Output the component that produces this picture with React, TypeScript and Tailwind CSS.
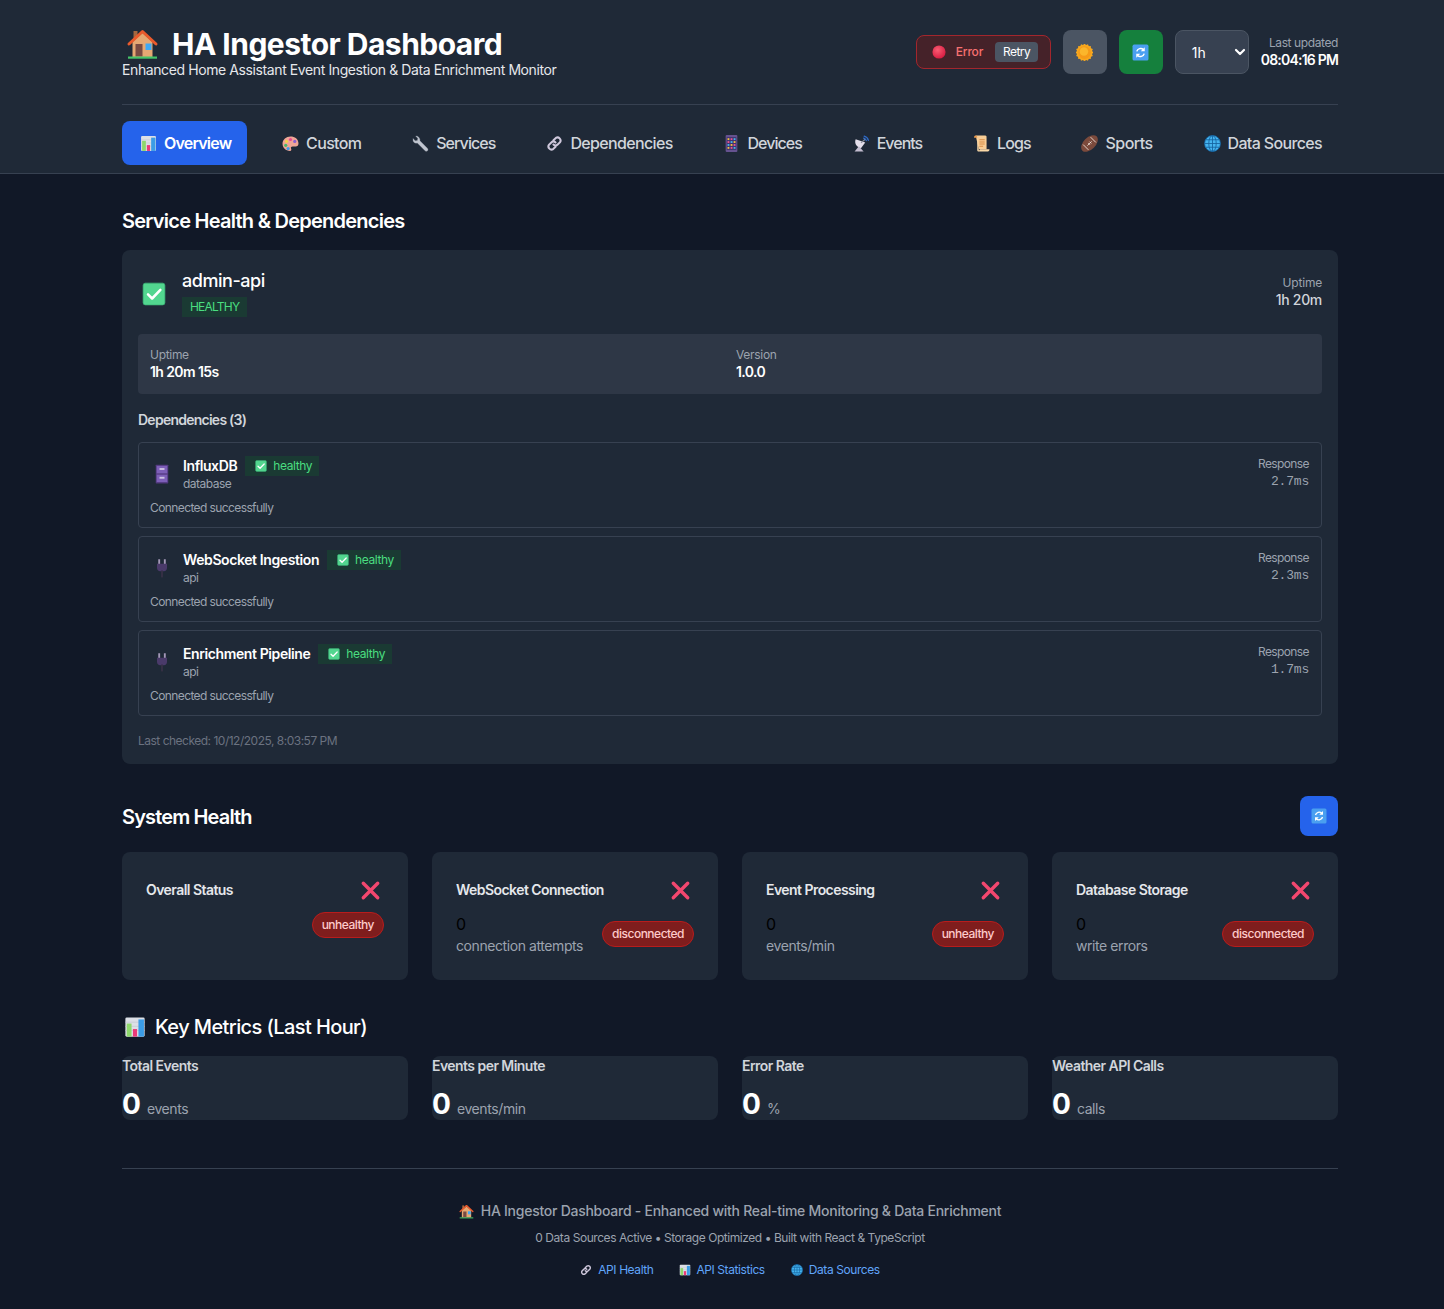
import type { ReactNode } from "react";

function House({ className = "" }: { className?: string }) {
    return (
        <svg className={className} viewBox="0 0 32 32">
            <rect x="7" y="3" width="4" height="11" fill="#a5673f" />
            <path d="M6 14 16 5l10 9v15H6z" fill="#e6a873" />
            <path d="M2.500 16 16 3.500 29.500 16" fill="none" stroke="#ea5a2c" strokeWidth="3" strokeLinecap="round" strokeLinejoin="round" />
            <rect x="9" y="16" width="7" height="12.500" fill="#7a4a42" />
            <rect x="19" y="15.500" width="6" height="6.500" fill="#3fa9f5" />
            <rect x="1.500" y="28.500" width="29" height="2.200" fill="#45c468" />
        </svg>
    );
}

function Chart({ className = "" }: { className?: string }) {
    return (
        <svg className={className} viewBox="0 0 32 32">
            <rect x="2" y="2" width="28" height="28" rx="2" fill="#dcdfe6" />
            <path d="M2 9h28M2 15h28M2 21h28" stroke="#c2c6d0" strokeWidth="1" />
            <rect x="4" y="11" width="7" height="19" fill="#8ed86c" />
            <rect x="13" y="19" width="6" height="11" fill="#ec3a78" />
            <rect x="21" y="5" width="8" height="25" fill="#3b9ce6" />
        </svg>
    );
}

function Palette({ className = "" }: { className?: string }) {
    return (
        <svg className={className} viewBox="0 0 32 32">
            <path d="M16 3C8 3 1 9 1 16.500S7 30 15 30c3 0 3-3 2-4.500-1-2 0-4 3-4h6c3 0 5-2 5-5.500C31 8 24 3 16 3z" fill="#f0a596" />
            <circle cx="8.500" cy="12" r="3" fill="#f0d24c" />
            <circle cx="16" cy="8.500" r="3" fill="#e9488f" />
            <circle cx="24" cy="12" r="3" fill="#8a5fd0" />
            <circle cx="7" cy="19.500" r="3" fill="#47b96b" />
            <circle cx="11.500" cy="25.500" r="3" fill="#3f9fe8" />
        </svg>
    );
}

function Wrench({ className = "" }: { className?: string }) {
    return (
        <svg className={className} viewBox="0 0 32 32">
            <path d="M7 2 11 6.500 10 10.500 6 11 2 6.500C1 11 3 15 7.500 15.500L10 15l14.500 14.500c1.500 1.500 3.500 1.500 4.700.2 1.300-1.300 1.200-3.200-.2-4.700L15 11c.8-5-4-10-8-9z" fill="#c0c5cf" stroke="#9199a6" strokeWidth=".6" />
        </svg>
    );
}

function ChainLink({ className = "" }: { className?: string }) {
    return (
        <svg className={className} viewBox="0 0 32 32" fill="none" stroke="#cfc8dc" strokeWidth="3.800" strokeLinecap="round">
            <path d="M14 10 18.500 5.500a5.800 5.800 0 0 1 8 8L22 18a5.800 5.800 0 0 1-8 0" />
            <path d="M18 22 13.500 26.500a5.800 5.800 0 0 1-8-8L10 14a5.800 5.800 0 0 1 8 0" />
        </svg>
    );
}

function Phone({ className = "" }: { className?: string }) {
    return (
        <svg className={className} viewBox="0 0 32 32">
            <rect x="5" y="0" width="22" height="32" rx="2" fill="#65528f" />
            <rect x="7" y="4" width="18" height="24" fill="#3f3270" />
            {[6, 11.500, 17, 22.500].map((y, r) =>
                [8.500, 14.300, 20].map((x, i) => (
                    <rect key={`${x}-${y}`} x={x} y={y} width="3.500" height="3.500" fill={["#f0c23f", "#e9568f", "#45b8e8"][(i + r) % 3]} />
                ))
            )}
        </svg>
    );
}

function Satellite({ className = "" }: { className?: string }) {
    return (
        <svg className={className} viewBox="0 0 32 32">
            <path d="M5 8c-3 8 2 15 10 17l8-11z" fill="#e3deea" />
            <path d="M11 21 3 31h17z" fill="#c3bdd0" />
            <path d="M15 15 23 8" stroke="#8a8f9c" strokeWidth="2" />
            <path d="M21 2c4 1 7 4 8 8M20 6c2 .6 4 2.400 5 4.500" fill="none" stroke="#2f6bc8" strokeWidth="2.400" strokeLinecap="round" />
        </svg>
    );
}

function Scroll({ className = "" }: { className?: string }) {
    return (
        <svg className={className} viewBox="0 0 32 32">
            <path d="M5 1h18c2 0 2.500 1.500 2.500 3v23H11z" fill="#f8cd96" />
            <path d="M5 1C3 1 2 2.500 2 5h6C8 2.500 7 1 5 1z" fill="#e99a4f" />
            <path d="M8 3v25c0 2 1 3 3 3h17c2 0 3-1.500 3-4H13c0 1.500-.5 2-2 2" fill="#fbd9a8" />
            <path d="M12 9h10M12 13h10M12 17h10M12 21h7" stroke="#d68c45" strokeWidth="2" />
        </svg>
    );
}

function Football({ className = "" }: { className?: string }) {
    return (
        <svg className={className} viewBox="0 0 32 32">
            <ellipse cx="16" cy="16" rx="19" ry="11.500" transform="rotate(-45 16 16)" fill="#7b4a3c" />
            <path d="M4 18 14 28M18 4 28 14" stroke="#e8d7cf" strokeWidth="1.800" />
            <path d="M12 20 20 12M13.500 15l3.500 3.500M16 12.500l3.500 3.500" stroke="#f2e7e0" strokeWidth="1.500" />
        </svg>
    );
}

function Globe({ className = "" }: { className?: string }) {
    return (
        <svg className={className} viewBox="0 0 32 32" fill="none" stroke="#15629e" strokeWidth="1.600">
            <circle cx="16" cy="16" r="15" fill="#45b4ef" />
            <ellipse cx="16" cy="16" rx="7" ry="15" />
            <path d="M16 1v30M1 16h30M3.500 9h25M3.500 23h25" />
        </svg>
    );
}

function Sun({ className = "" }: { className?: string }) {
    return (
        <svg className={className} viewBox="0 0 32 32">
            {[0, 22.500, 45, 67.500].map((a) => (
                <rect key={a} x="4" y="4" width="24" height="24" fill="#f7a81e" transform={`rotate(${a} 16 16)`} />
            ))}
            <circle cx="16" cy="16" r="12" fill="#f59a18" />
            <circle cx="15" cy="14" r="8" fill="#fbb62b" />
        </svg>
    );
}

function Refresh({ className = "" }: { className?: string }) {
    return (
        <svg className={className} viewBox="0 0 32 32">
            <rect x="1" y="1" width="30" height="30" rx="3" fill="#4a9ff0" />
            <path d="M9 14a7.500 7.500 0 0 1 12.500-3.500" fill="none" stroke="#fff" strokeWidth="2.800" />
            <path d="M24 6v7.500h-7.500z" fill="#fff" />
            <path d="M23 18a7.500 7.500 0 0 1-12.500 3.500" fill="none" stroke="#fff" strokeWidth="2.800" />
            <path d="M8 26v-7.500h7.500z" fill="#fff" />
        </svg>
    );
}

function RedDot({ className = "" }: { className?: string }) {
    return (
        <svg className={className} viewBox="0 0 32 32">
            <defs>
                <radialGradient id="redDot" cx="40%" cy="35%" r="70%">
                    <stop offset="0%" stopColor="#f95c72" />
                    <stop offset="100%" stopColor="#d5193f" />
                </radialGradient>
            </defs>
            <circle cx="16" cy="16" r="15" fill="url(#redDot)" />
        </svg>
    );
}

function CheckBox({ className = "" }: { className?: string }) {
    return (
        <svg className={className} viewBox="0 0 32 32">
            <rect x="1.500" y="1.500" width="29" height="29" rx="3" fill="#52d68f" stroke="#3cb878" strokeWidth="1" />
            <path d="M8 16.500l5.500 5.500L24.500 10.500" fill="none" stroke="#fff" strokeWidth="3.400" strokeLinecap="round" strokeLinejoin="round" />
        </svg>
    );
}

function Cabinet({ className = "" }: { className?: string }) {
    return (
        <svg className={className} viewBox="0 0 32 32">
            <rect x="6" y="1" width="20" height="30" rx="1" fill="#52397f" />
            <rect x="7.500" y="3" width="17" height="12" fill="#7d5fb8" />
            <rect x="7.500" y="17" width="17" height="12" fill="#7d5fb8" />
            <rect x="12" y="6.500" width="8" height="3" fill="#cdc2e2" />
            <rect x="12" y="20.500" width="8" height="3" fill="#cdc2e2" />
        </svg>
    );
}

function Plug({ className = "" }: { className?: string }) {
    return (
        <svg className={className} viewBox="0 0 32 32">
            <rect x="10" y="2" width="3" height="8" fill="#a498b8" />
            <rect x="19" y="2" width="3" height="8" fill="#a498b8" />
            <path d="M8 9h16v7c0 3-2 5-5 5h-6c-3 0-5-2-5-5z" fill="#4a3a6a" />
            <rect x="14.500" y="20" width="3" height="11" fill="#373046" />
        </svg>
    );
}

function Cross({ className = "" }: { className?: string }) {
    return (
        <svg className={className} viewBox="0 0 32 32">
            <path d="M5 5 27 27M27 5 5 27" stroke="#f2476f" strokeWidth="5.200" strokeLinecap="round" />
        </svg>
    );
}

const navItems = [
    { name: "Overview", icon: Chart, tracking: "tracking-[-0.8px]" },
    { name: "Custom", icon: Palette, tracking: "tracking-[-0.65px]" },
    { name: "Services", icon: Wrench, tracking: "tracking-[-0.9px]" },
    { name: "Dependencies", icon: ChainLink, tracking: "tracking-[-0.65px]" },
    { name: "Devices", icon: Phone, tracking: "tracking-[-0.95px]" },
    { name: "Events", icon: Satellite, tracking: "tracking-[-1px]" },
    { name: "Logs", icon: Scroll, tracking: "tracking-[-0.9px]" },
    { name: "Sports", icon: Football, tracking: "tracking-[-0.5px]" },
    { name: "Data Sources", icon: Globe, tracking: "tracking-[-0.65px]" },
];

const dependencies = [
    { name: "InfluxDB", kind: "database", time: "2.7ms", icon: Cabinet },
    { name: "WebSocket Ingestion", kind: "api", time: "2.3ms", icon: Plug },
    { name: "Enrichment Pipeline", kind: "api", time: "1.7ms", icon: Plug },
];

const healthCards = [
    { title: "Overall Status", status: "unhealthy", value: "", label: "" },
    { title: "WebSocket Connection", status: "disconnected", value: "0", label: "connection attempts" },
    { title: "Event Processing", status: "unhealthy", value: "0", label: "events/min" },
    { title: "Database Storage", status: "disconnected", value: "0", label: "write errors" },
];

const metrics = [
    { title: "Total Events", unit: "events" },
    { title: "Events per Minute", unit: "events/min" },
    { title: "Error Rate", unit: "%" },
    { title: "Weather API Calls", unit: "calls" },
];

function Container({ children }: { children: ReactNode }) {
    return <div className="ml-[122px] w-[1216px]">{children}</div>;
}

export default function App() {
    return (
        <div className="min-h-[1309px] bg-[#111827] font-['Inter',sans-serif] text-white">
            {/* Header */}
            <header className="h-[174px] border-b border-[#374151] bg-[#1f2937]">
                <Container>
                    <div className="flex h-[105px] items-start justify-between border-b border-[#374151] pt-[26px]">
                        <div>
                            <h1 className="flex h-[36px] items-center text-[30px] leading-[36px] font-bold tracking-[-0.52px]">
                                <House className="mr-[13px] ml-[4px] h-[32px] w-[33px]" />
                                HA Ingestor Dashboard
                            </h1>
                            <p className="text-[14px] leading-[16px] tracking-[-0.4px] text-[#e5e7eb]">Enhanced Home Assistant Event Ingestion &amp; Data Enrichment Monitor</p>
                        </div>
                        <div className="flex items-center gap-3 pt-[4px]">
                            <div className="flex h-[34px] w-[135px] items-center rounded-lg border border-[#a3262d] bg-[#452229] pl-[15px]">
                                <RedDot className="h-[14px] w-[14px]" />
                                <span className="ml-[10px] text-[12px] font-medium tracking-[-0.2px] text-[#f87171]">Error</span>
                                <span className="ml-[12px] flex h-[20px] items-center rounded bg-[#4b5563] px-[8px] text-[12px] tracking-[-0.6px] text-white">Retry</span>
                            </div>
                            <button className="flex h-[44px] w-[44px] items-center justify-center rounded-lg bg-[#4b5563]">
                                <Sun className="mt-[1px] h-[17px] w-[17px]" />
                            </button>
                            <button className="flex h-[44px] w-[44px] items-center justify-center rounded-lg bg-[#15803d]">
                                <Refresh className="h-[17px] w-[17px]" />
                            </button>
                            <div className="flex h-[44px] w-[74px] items-center justify-between rounded-lg border border-[#4b5563] bg-[#374151] pl-[16px] text-[14px]">
                                1h
                                <svg className="h-[16px] w-[16px]" viewBox="0 0 16 16" fill="none" stroke="#fff" strokeWidth="2.200" strokeLinecap="round" strokeLinejoin="round">
                                    <path d="M4 6l4 4 4-4" />
                                </svg>
                            </div>
                            <div className="text-right">
                                <p className="text-[12px] leading-[16px] tracking-[-0.4px] text-[#9ca3af]">Last updated</p>
                                <p className="text-[14px] leading-[18px] font-semibold tracking-[-0.8px]">08:04:16 PM</p>
                            </div>
                        </div>
                    </div>
                    {/* Tabs */}
                    <nav className="flex justify-between pt-[16px]">
                        {navItems.map((item) => (
                            <div
                                key={item.name}
                                className={`flex h-[44px] items-center gap-[7px] rounded-lg pr-[16px] pl-[18px] text-[16px] font-medium ${item.tracking} ${
                                    item.name === "Overview" ? "bg-[#2563eb] font-semibold text-white" : "text-[#d1d5db]"
                                }`}
                            >
                                <item.icon className="h-[17px] w-[17px]" />
                                {item.name}
                            </div>
                        ))}
                    </nav>
                </Container>
            </header>

            <Container>
                {/* Service health */}
                <section className="pt-[33px]">
                    <h2 className="text-[20px] leading-[28px] font-semibold tracking-[-0.75px]">Service Health &amp; Dependencies</h2>
                    <div className="mt-[15px] h-[514px] rounded-lg bg-[#1f2937] p-[16px] pt-[20px]">
                        <div className="flex justify-between">
                            <div className="flex items-center gap-[16px] pl-[4px]">
                                <CheckBox className="h-[24px] w-[24px]" />
                                <div>
                                    <p className="text-[18px] leading-[22px] font-medium tracking-[-0.45px]">admin-api</p>
                                    <span className="mt-[5px] inline-block bg-[#1a3a33] px-[8px] py-[2px] text-[12px] leading-[16px] tracking-[-0.8px] text-[#4ade80]">HEALTHY</span>
                                </div>
                            </div>
                            <div className="pt-[5px] text-right">
                                <p className="text-[12px] leading-[16px] tracking-[-0.2px] text-[#9ca3af]">Uptime</p>
                                <p className="text-[14px] leading-[18px] font-medium tracking-[-0.3px] text-[#d1d5db]">1h 20m</p>
                            </div>
                        </div>
                        <div className="mt-[17px] grid h-[60px] grid-cols-2 gap-[12px] rounded bg-[#2e3746] px-[12px] py-[12px]">
                            <div>
                                <p className="text-[12px] leading-[18px] tracking-[-0.3px] text-[#9ca3af]">Uptime</p>
                                <p className="text-[14px] leading-[16px] font-semibold tracking-[-0.6px]">1h 20m 15s</p>
                            </div>
                            <div>
                                <p className="text-[12px] leading-[18px] tracking-[-0.3px] text-[#9ca3af]">Version</p>
                                <p className="text-[14px] leading-[16px] font-semibold tracking-[-0.6px]">1.0.0</p>
                            </div>
                        </div>
                        <h3 className="mt-[16px] text-[14px] leading-[20px] font-semibold tracking-[-0.75px] text-[#d1d5db]">Dependencies (3)</h3>
                        <div className="mt-[12px] flex flex-col gap-[8px]">
                            {dependencies.map((dep) => (
                                <div key={dep.name} className="h-[86px] rounded border border-[#374151] pt-[13px] pr-[12px] pl-[11px]">
                                    <div className="flex justify-between">
                                        <div className="flex items-center gap-[9px]">
                                            <dep.icon className="h-[20px] w-[24px]" />
                                            <div>
                                                <div className="flex items-center gap-[8px]">
                                                    <span className="text-[14px] leading-[20px] font-semibold tracking-[-0.4px]">{dep.name}</span>
                                                    <span className="flex h-[20px] items-center gap-[6px] bg-[#1a3a33] pr-[7px] pl-[10px] text-[12px] tracking-[-0.4px] text-[#4ade80]">
                                                        <CheckBox className="h-[12px] w-[12px]" />
                                                        healthy
                                                    </span>
                                                </div>
                                                <p className="text-[12px] leading-[16px] tracking-[-0.5px] text-[#9ca3af]">{dep.kind}</p>
                                            </div>
                                        </div>
                                        <div className="text-right">
                                            <p className="text-[12px] leading-[16px] tracking-[-0.6px] text-[#9ca3af]">Response</p>
                                            <p className="font-['Liberation_Mono',monospace] text-[13px] leading-[20px] tracking-[-0.2px] text-[#9ca3af]">{dep.time}</p>
                                        </div>
                                    </div>
                                    <p className="mt-[8px] text-[12px] leading-[16px] tracking-[-0.6px] text-[#9ca3af]">Connected successfully</p>
                                </div>
                            ))}
                        </div>
                        <p className="mt-[17px] text-[12px] leading-[16px] tracking-[-0.5px] text-[#6b7280]">Last checked: 10/12/2025, 8:03:57 PM</p>
                    </div>
                </section>

                {/* System health */}
                <section className="pt-[32px]">
                    <div className="flex h-[40px] items-center justify-between">
                        <h2 className="pt-[2px] text-[20px] leading-[28px] font-semibold tracking-[-0.85px]">System Health</h2>
                        <button className="flex h-[40px] w-[38px] items-center justify-center rounded-lg bg-[#2563eb]">
                            <Refresh className="h-[16px] w-[16px]" />
                        </button>
                    </div>
                    <div className="mt-[16px] grid grid-cols-4 gap-[24px]">
                        {healthCards.map((card) => (
                            <div key={card.title} className="h-[128px] rounded-lg bg-[#1f2937] p-[24px]">
                                <div className="flex h-[28px] items-center justify-between pr-[3px]">
                                    <span className="mb-[2px] text-[14px] font-semibold tracking-[-0.55px] text-[#e5e7eb]">{card.title}</span>
                                    <Cross className="h-[21px] w-[21px]" />
                                </div>
                                <div className="flex items-center justify-between pt-[9px]">
                                    <div className="min-h-[26px]">
                                        {card.value && <p className="text-[16px] leading-[22px] text-black">{card.value}</p>}
                                        {card.label && <p className="text-[14px] leading-[22px] tracking-[-0.42px] text-[#9ca3af]">{card.label}</p>}
                                    </div>
                                    <span className="-mt-[2px] rounded-full border border-[#b91c1c] bg-[#7f1d1d] px-[9px] py-[4px] text-[12px] leading-[16px] font-medium tracking-[-0.5px] text-[#fecaca]">
                                        {card.status}
                                    </span>
                                </div>
                            </div>
                        ))}
                    </div>
                </section>

                {/* Key metrics */}
                <section className="pt-[33px]">
                    <h2 className="flex items-center text-[20px] leading-[28px] font-medium tracking-[-0.6px]">
                        <Chart className="mr-[9px] ml-[2px] h-[22px] w-[22px]" />
                        Key Metrics (Last Hour)
                    </h2>
                    <div className="mt-[15px] grid grid-cols-4 gap-[24px]">
                        {metrics.map((metric) => (
                            <div key={metric.title} className="h-[64px] rounded-lg bg-[#1f2937]">
                                <p className="text-[14px] leading-[20px] font-semibold tracking-[-0.55px] text-[#d1d5db]">{metric.title}</p>
                                <p className="mt-[10px] flex items-baseline leading-[36px]">
                                    <span className="text-[28px] font-bold">0</span>
                                    <span className="ml-[6px] text-[14px] tracking-[-0.4px] text-[#9ca3af]">{metric.unit}</span>
                                </p>
                            </div>
                        ))}
                    </div>
                </section>

                {/* Footer */}
                <footer className="mt-[48px] border-t border-[#374151] pt-[32px] text-center">
                    <p className="flex items-center justify-center text-[14px] leading-[20px] font-medium tracking-[-0.26px] text-[#9ca3af]">
                        <House className="mr-[7px] h-[15px] w-[15px]" />
                        HA Ingestor Dashboard - Enhanced with Real-time Monitoring &amp; Data Enrichment
                    </p>
                    <p className="mt-[8px] text-[12px] leading-[18px] tracking-[-0.44px] text-[#9ca3af]">0 Data Sources Active • Storage Optimized • Built with React &amp; TypeScript</p>
                    <div className="mt-[15px] flex justify-center gap-[26px] text-[12px] leading-[16px] tracking-[-0.42px] text-[#60a5fa]">
                        <span className="flex items-center gap-[6px]">
                            <ChainLink className="h-[12px] w-[12px]" />
                            API Health
                        </span>
                        <span className="flex items-center gap-[5px]">
                            <Chart className="h-[12px] w-[12px]" />
                            API Statistics
                        </span>
                        <span className="flex items-center gap-[6px]">
                            <Globe className="h-[12px] w-[12px]" />
                            Data Sources
                        </span>
                    </div>
                </footer>
            </Container>
        </div>
    );
}
